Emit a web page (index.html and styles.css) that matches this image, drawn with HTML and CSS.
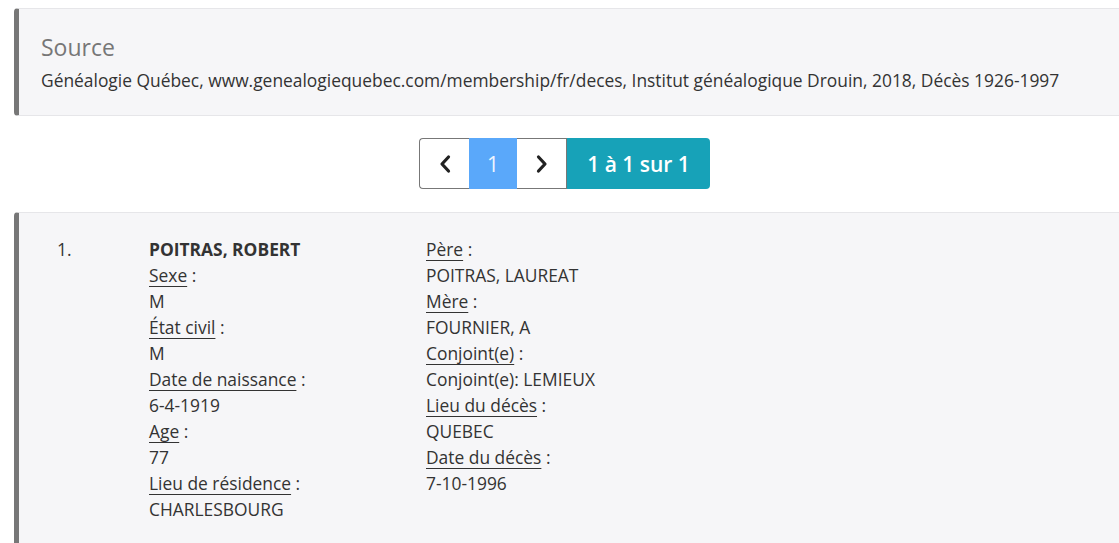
FILE: index.html
```html
<!DOCTYPE html>
<html lang="fr">
<head>
    <meta charset="UTF-8">
    <meta name="viewport" content="width=device-width, initial-scale=1.0">
    <title>Décès 1926-1997</title>
    <link rel="stylesheet" href="styles.css">
</head>
<body>
    <div class="page">
        <div class="panel source">
            <h3 class="source-title">Source</h3>
            <p class="source-text">Généalogie Québec, www.genealogiequebec.com/membership/fr/deces, Institut généalogique Drouin, 2018, Décès 1926-1997</p>
        </div>

        <div class="pager">
            <div class="pager-group">
                <button class="pager-btn arrow prev" aria-label="Précédent">
                    <svg width="14" height="20" viewBox="0 0 14 20"><path d="M10.5 3 L4 10 L10.5 17" fill="none" stroke="#222" stroke-width="3.2" stroke-linecap="round" stroke-linejoin="round"/></svg>
                </button>
                <button class="pager-btn current">1</button>
                <button class="pager-btn arrow next" aria-label="Suivant">
                    <svg width="14" height="20" viewBox="0 0 14 20"><path d="M3.5 3 L10 10 L3.5 17" fill="none" stroke="#222" stroke-width="3.2" stroke-linecap="round" stroke-linejoin="round"/></svg>
                </button>
                <span class="pager-info">1 à 1 sur 1</span>
            </div>
        </div>

        <div class="panel record">
            <div class="record-num">1.</div>
            <div class="record-col">
                <div class="record-name">POITRAS, ROBERT</div>
                <div><span class="label">Sexe</span> :</div>
                <div>M</div>
                <div><span class="label">État civil</span> :</div>
                <div>M</div>
                <div><span class="label">Date de naissance</span> :</div>
                <div>6-4-1919</div>
                <div><span class="label">Age</span> :</div>
                <div>77</div>
                <div><span class="label">Lieu de résidence</span> :</div>
                <div>CHARLESBOURG</div>
            </div>
            <div class="record-col">
                <div><span class="label">Père</span> :</div>
                <div>POITRAS, LAUREAT</div>
                <div><span class="label">Mère</span> :</div>
                <div>FOURNIER, A</div>
                <div><span class="label">Conjoint(e)</span> :</div>
                <div>Conjoint(e): LEMIEUX</div>
                <div><span class="label">Lieu du décès</span> :</div>
                <div>QUEBEC</div>
                <div><span class="label">Date du décès</span> :</div>
                <div>7-10-1996</div>
            </div>
        </div>
    </div>
</body>
</html>
```

FILE: styles.css
```css
* {
    margin: 0;
    padding: 0;
    box-sizing: border-box;
}

body {
    font-family: 'Open Sans', 'Noto Sans', sans-serif;
    font-size: 17.4px;
    color: #333;
    background-color: #fff;
}

.page {
    padding: 8px 0 0 14px;
}

.panel {
    background-color: #f6f6f8;
    border-left: 5px solid #777;
    border-top: 1px solid #e6e6e9;
    border-bottom: 1px solid #e6e6e9;
    border-radius: 4px 0 0 4px;
}

.source {
    padding: 25px 22px 23px;
}

.source-title {
    font-size: 23px;
    font-weight: 400;
    line-height: 26px;
    color: #777;
    margin-bottom: 8px;
}

.source-text {
    line-height: 24px;
}

.pager {
    display: flex;
    justify-content: center;
    padding-right: 4px;
    margin: 22px 0 23px;
}

.pager-group {
    display: flex;
    height: 51px;
}

.pager-btn {
    display: flex;
    align-items: center;
    justify-content: center;
    font-family: inherit;
    border: 1px solid #777;
    background-color: #fff;
    cursor: pointer;
}

.arrow {
    width: 50px;
}

.prev {
    border-right: none;
    border-radius: 4px 0 0 4px;
}

.next {
    border-left: none;
}

.current {
    width: 48px;
    border: none;
    background-color: #5aa8fa;
    color: #eef5ff;
    font-size: 21px;
}

.pager-info {
    display: flex;
    align-items: center;
    justify-content: center;
    width: 143px;
    background-color: #17a2b8;
    color: #fff;
    font-size: 21px;
    font-weight: 600;
    border-radius: 0 4px 4px 0;
}

.record {
    display: grid;
    grid-template-columns: 92px 277px 1fr;
    padding: 23px 38px 22px;
    border-bottom: none;
    border-radius: 4px 0 0 0;
    line-height: 26px;
}

.record-name {
    font-weight: 700;
}

.label {
    text-decoration: underline;
    text-underline-offset: 4px;
    text-decoration-thickness: 1px;
}
```
